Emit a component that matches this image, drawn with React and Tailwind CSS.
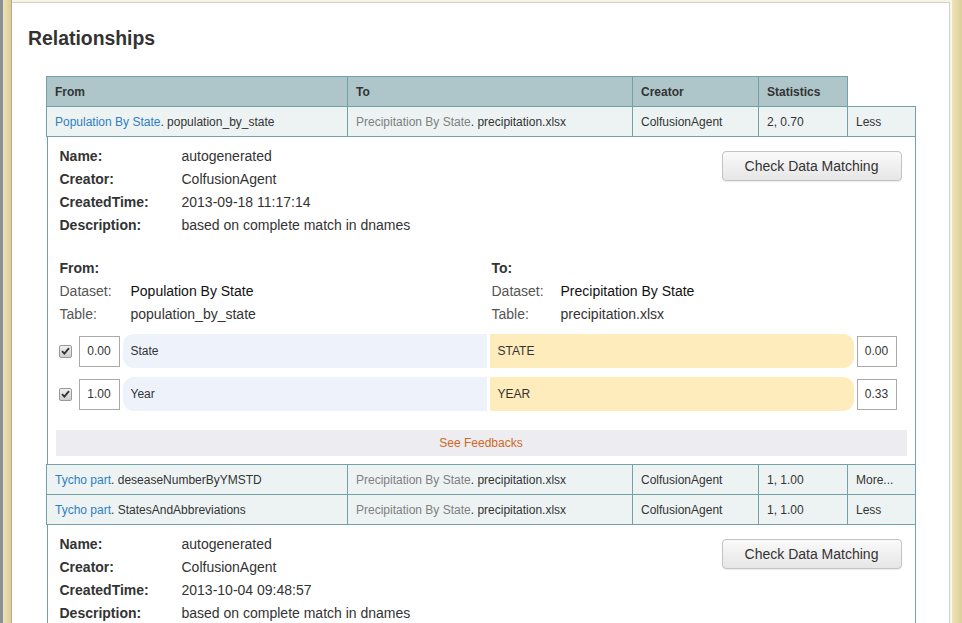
const rows = [
  {
    fromDs: "Population By State",
    fromTable: "population_by_state",
    toDs: "Precipitation By State",
    toTable: "precipitation.xlsx",
    creator: "ColfusionAgent",
    stats: "2, 0.70",
    action: "Less",
    detail: {
      time: "2013-09-18 11:17:14",
      mappings: [
        { left: "0.00", from: "State", to: "STATE", right: "0.00" },
        { left: "1.00", from: "Year", to: "YEAR", right: "0.33" },
      ],
    },
  },
  {
    fromDs: "Tycho part",
    fromTable: "deseaseNumberByYMSTD",
    toDs: "Precipitation By State",
    toTable: "precipitation.xlsx",
    creator: "ColfusionAgent",
    stats: "1, 1.00",
    action: "More...",
  },
  {
    fromDs: "Tycho part",
    fromTable: "StatesAndAbbreviations",
    toDs: "Precipitation By State",
    toTable: "precipitation.xlsx",
    creator: "ColfusionAgent",
    stats: "1, 1.00",
    action: "Less",
    // only the top of this one fits in the window
    detail: { time: "2013-10-04 09:48:57", infoOnly: true },
  },
];

const Check = () => (
  <span className="flex h-[13px] w-[13px] items-center justify-center rounded-[2px] border border-[#9a9a9a] bg-gradient-to-b from-[#f0f0f0] to-[#cfcfcf]">
    <svg width="9" height="8" viewBox="0 0 9 8">
      <path d="M1 4.2 L3.4 6.6 L8 1.2" fill="none" stroke="#333" strokeWidth="1.8" />
    </svg>
  </span>
);

const Detail = ({ row }) => {
  const d = row.detail;
  const info = [
    ["Name:", "autogenerated"],
    ["Creator:", "ColfusionAgent"],
    ["CreatedTime:", d.time],
    ["Description:", "based on complete match in dnames"],
  ];
  return (
    <div className="border-x border-[#72a2a8] pb-[8px]">
      <div className="flex justify-between pl-[12px] pr-[13px] pt-[8px]">
        <div className="text-[14px] leading-[23px] text-[#333]">
          {info.map(([k, v]) => (
            <div key={k} className="flex">
              <span className="w-[122px] font-bold">{k}</span>
              <span>{v}</span>
            </div>
          ))}
        </div>
        <button className="mt-[6px] h-[30px] w-[180px] rounded-[4px] border border-[#c4c4c4] bg-gradient-to-b from-[#fafafa] to-[#e6e6e6] text-[14px] text-[#333] shadow-[0_1px_1px_rgba(0,0,0,0.08)]">
          Check Data Matching
        </button>
      </div>

      {!d.infoOnly && (
        <>
          <div className="mt-[20px] grid grid-cols-[432px_1fr] pl-[12px] text-[14px] leading-[23px]">
            <div>
              <div className="font-bold text-[#333]">From:</div>
              <div className="flex">
                <span className="w-[71px] text-[#555]">Dataset:</span>
                <span className="text-[#111]">{row.fromDs}</span>
              </div>
              <div className="flex">
                <span className="w-[71px] text-[#555]">Table:</span>
                <span className="text-[#333]">{row.fromTable}</span>
              </div>
            </div>
            <div>
              <div className="font-bold text-[#333]">To:</div>
              <div className="flex">
                <span className="w-[69px] text-[#555]">Dataset:</span>
                <span className="text-[#111]">{row.toDs}</span>
              </div>
              <div className="flex">
                <span className="w-[69px] text-[#555]">Table:</span>
                <span className="text-[#333]">{row.toTable}</span>
              </div>
            </div>
          </div>

          <div className="mt-[8px] flex flex-col gap-[9px] pl-[11px] text-[12px] text-[#333]">
            {d.mappings.map((m) => (
              <div key={m.from} className="flex h-[34px] items-center">
                <Check />
                <span className="ml-[7px] flex h-[31px] w-[41px] items-center justify-center border border-[#aaa]">{m.left}</span>
                <span className="ml-[3px] flex h-[34px] w-[364px] items-center rounded-l-[11px] bg-[#eef2fb] pl-[8px]">{m.from}</span>
                <span className="ml-[3px] flex h-[34px] w-[364px] items-center rounded-r-[11px] bg-[#feecbd] pl-[8px]">{m.to}</span>
                <span className="ml-[3px] flex h-[31px] w-[40px] items-center justify-center border border-[#aaa]">{m.right}</span>
              </div>
            ))}
          </div>

          <div className="mx-[8px] mt-[19px] flex h-[26px] items-center justify-center bg-[#ececf1] text-[12px] text-[#cc6a1f]">
            See Feedbacks
          </div>
        </>
      )}
    </div>
  );
};

const cell = "h-[30px] border border-[#72a2a8] px-[8px] text-left align-middle";

export default function App() {
  return (
    <div className="flex h-[623px] overflow-hidden bg-[#f8f5de] font-['Liberation_Sans',Arial,sans-serif]">
      <div className="w-[3px] bg-[#8d9197]" />
      <div className="w-[8px] bg-gradient-to-r from-[#efe4b4] to-[#d9cd9a]" />
      <div className="w-px bg-[#b9ae84]" />
      <div className="mt-[2px] flex-1 border-t border-r border-[#d2d2d2] bg-white pl-[16px] pt-[23px]">
        <h1 className="text-[19.4px] font-bold leading-[24px] text-[#333]">Relationships</h1>
        <div className="ml-[18px] mt-[26px] w-[869px]">
          <table className="w-[869px] table-fixed border-collapse text-[12px] text-[#333]">
            <colgroup>
              <col className="w-[301px]" />
              <col className="w-[285px]" />
              <col className="w-[126px]" />
              <col className="w-[89px]" />
              <col className="w-[68px]" />
            </colgroup>
            <thead>
              <tr className="bg-[#aec6ca] font-bold">
                <th className={cell}>From</th>
                <th className={cell}>To</th>
                <th className={cell}>Creator</th>
                <th className={cell}>Statistics</th>
                <th className="border-b border-[#72a2a8] bg-white" />
              </tr>
            </thead>
            <tbody>
              {rows.map((r, i) => (
                <>
                  <tr key={"r" + i} className="bg-[#edf3f3]">
                    <td className={cell}>
                      <span className="text-[#2d7fc1]">{r.fromDs}</span>. {r.fromTable}
                    </td>
                    <td className={cell}>
                      <span className="text-[#808080]">{r.toDs}</span>. {r.toTable}
                    </td>
                    <td className={cell}>{r.creator}</td>
                    <td className={cell}>{r.stats}</td>
                    <td className={cell}>{r.action}</td>
                  </tr>
                  {r.detail && (
                    <tr key={"d" + i}>
                      <td colSpan={5} className="p-0">
                        <Detail row={r} />
                      </td>
                    </tr>
                  )}
                </>
              ))}
            </tbody>
          </table>
        </div>
      </div>
      <div className="w-[2px] bg-[#f8f6ea]" />
      <div className="w-[10px] bg-gradient-to-r from-[#efe4b4] to-[#dccf9c]" />
    </div>
  );
}
